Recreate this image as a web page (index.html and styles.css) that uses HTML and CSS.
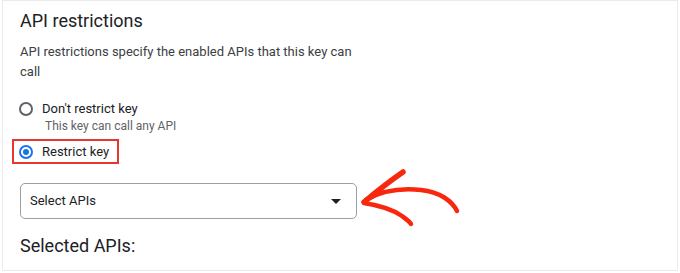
FILE: index.html
```html
<!DOCTYPE html>
<html>
<head>
<meta charset="utf-8">
<link rel="stylesheet" href="styles.css">
</head>
<body>
<div class="card">
  <h2 class="title">API restrictions</h2>
  <p class="desc">API restrictions specify the enabled APIs that this key can call</p>
  <div class="option">
    <span class="radio"></span>
    <span class="label">Don't restrict key</span>
  </div>
  <div class="sub">This key can call any API</div>
  <div class="option option-marked">
    <span class="radio radio-on"><span class="dot"></span></span>
    <span class="label">Restrict key</span>
  </div>
  <div class="select">
    <span class="select-text">Select APIs</span>
    <span class="caret"></span>
  </div>
  <h2 class="title selected">Selected APIs:</h2>
</div>
<svg class="arrow" width="680" height="273" viewBox="0 0 680 273" xmlns="http://www.w3.org/2000/svg">
  <g fill="none" stroke="#f8280e" stroke-linecap="round" stroke-linejoin="round">
    <path d="M366,200 C381,191 401,188 421,190 C440,192 452,201 457,211" stroke-width="4.5"/>
    <path d="M403,172 C390,181 376,192 364,202" stroke-width="5.5"/>
    <path d="M364,203 C377,205 392,209 402,216 C406,219 409,221 411,224" stroke-width="4.5"/>
  </g>
</svg>
</body>
</html>
```

FILE: styles.css
```css
html, body {
  margin: 0;
  padding: 0;
  background: #ffffff;
}
body {
  font-family: Roboto, "Liberation Sans", sans-serif;
  color: #202124;
}
.card {
  box-sizing: border-box;
  margin-left: 2px;
  width: 676px;
  height: 271px;
  border: 1px solid #ebebeb;
  padding: 8px 0 0 17px;
}
.title {
  margin: 0;
  font-size: 18px;
  line-height: 24px;
  font-weight: 400;
  color: #202124;
}
.desc {
  margin: 9px 0 0 0;
  width: 345px;
  font-size: 13px;
  line-height: 20px;
  color: #3c4043;
}
.option {
  display: flex;
  align-items: center;
  margin-top: 18px;
  font-size: 13px;
  line-height: 18px;
  color: #202124;
}
.option-marked {
  display: inline-flex;
  margin-top: 5px;
  margin-left: -8px;
  border: 2px solid #e8362c;
  padding: 2px 8px 1px 5px;
}
.radio {
  box-sizing: border-box;
  width: 14px;
  height: 14px;
  margin-left: -1px;
  margin-right: 9px;
  border: 2px solid #5f6368;
  border-radius: 50%;
  display: flex;
  align-items: center;
  justify-content: center;
}
.option-marked .radio {
  margin-left: 0;
}
.radio-on {
  border-color: #1a73e8;
}
.dot {
  width: 6px;
  height: 6px;
  border-radius: 50%;
  background: #1a73e8;
}
.sub {
  margin-left: 25px;
  font-size: 12px;
  line-height: 16px;
  color: #5f6368;
}
.select {
  box-sizing: border-box;
  margin-top: 19px;
  width: 337px;
  height: 36px;
  border: 1px solid #9aa0a6;
  border-radius: 5px;
  display: flex;
  align-items: center;
  justify-content: space-between;
  padding: 0 15px 0 9px;
  font-size: 13px;
  line-height: 20px;
  color: #202124;
}
.caret {
  width: 0;
  height: 0;
  border-left: 5px solid transparent;
  border-right: 5px solid transparent;
  border-top: 5px solid #202124;
}
.selected {
  margin-top: 15px;
}
.arrow {
  position: absolute;
  left: 0;
  top: 0;
  pointer-events: none;
}
```
